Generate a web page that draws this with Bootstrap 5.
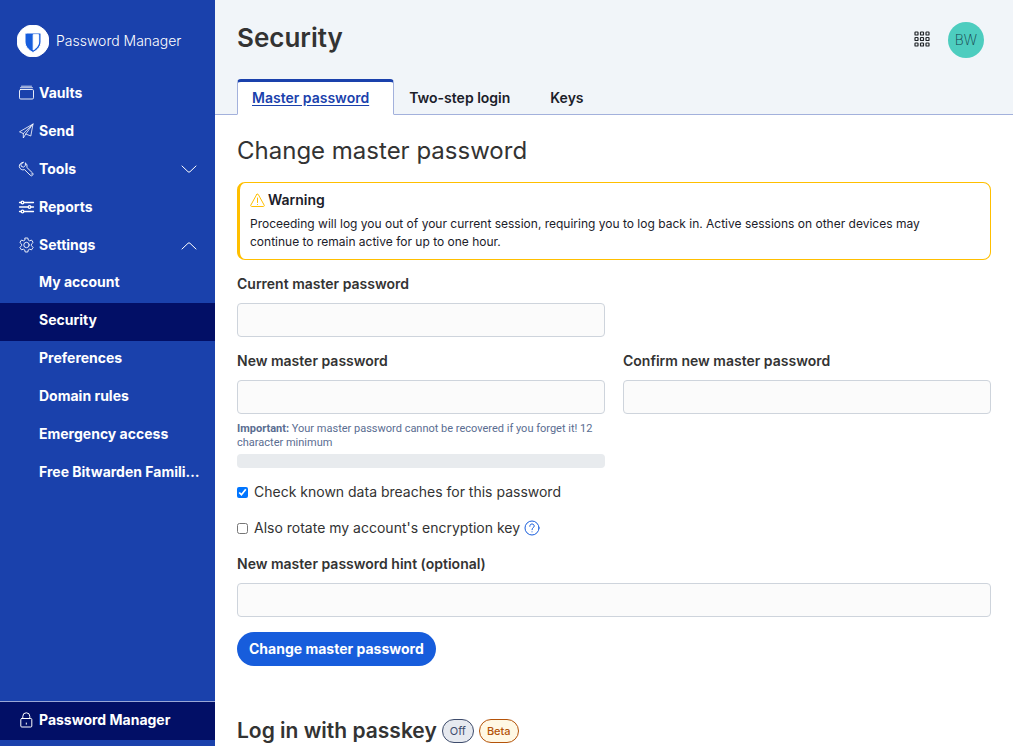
<!DOCTYPE html>
<html lang="en">
<head>
<meta charset="utf-8">
<meta name="viewport" content="width=device-width, initial-scale=1">
<title>Security | Password Manager</title>
<link href="https://cdn.jsdelivr.net/npm/bootstrap@5.3.0/dist/css/bootstrap.min.css" rel="stylesheet">
<style>
  body { font-family: Inter, "Open Sans", sans-serif; font-size: 14px; line-height: 20px; color: #333; background: #fff; }
  h1, h2 { color: #333; margin: 0; }
  h1 { font-size: 26px; line-height: 36px; font-weight: 600; }
  h2 { font-size: 24px; line-height: 32px; font-weight: 400; }
  svg { fill: none; stroke: currentColor; stroke-linecap: round; stroke-linejoin: round; flex: none; }

  .sidebar { width: 215px; background: #1a41ac; color: #fff; }
  .brand { padding: 25px 17px 18px; gap: 7px; font-size: 14px; font-weight: 300; color: #fff; }
  .side-link { height: 38px; padding: 0 18px 2px; gap: 4px; color: #fff; font-weight: 700; }
  .side-link:hover { color: #fff; background: #020f66; }
  .side-sub { padding: 0 12px 4px 39px; }
  .side-link.active { background: #020f66; }
  .switcher { border-top: 1px solid #99a6d6; background: #020f66; margin-bottom: 6px; }

  .page-head { background: #f1f5f9; padding: 20px 22px 0; }
  .avatar { width: 36px; height: 36px; background: #4dcdbf; color: #163d4a; font-size: 14px; font-weight: 200; border: 0; }
  .head-tools { gap: 18px; padding: 2px 7px 0 0; }
  .apps { padding: 0 0 3px; }
  .nav-tabs { --bs-nav-tabs-border-color: #a3b1dc; margin: 21px -22px 0; padding: 0 22px; }
  .nav-tabs .nav-link { border: 0 solid transparent; border-width: 3px 1px 1px; border-radius: 4px 4px 0 0; padding: 6px 24px 6px 14px; font-weight: 600; color: #1b2029; }
  .nav-tabs .nav-link.active { color: #1a41ac; text-decoration: underline; text-underline-offset: 2px; border-color: #1a41ac #a3b1dc #fff; background: #fff; }

  .content { padding: 20px 22px 0; }
  .warn { border: 1px solid #ffbf00; border-left-width: 3px; border-radius: 8px; padding: 7px 48px 8px 10px; color: #1b2029; font-size: 12px; line-height: 18px; margin: 15px 0 14px; }
  .warn-title { font-size: 14px; line-height: 20px; font-weight: 600; gap: 3px; margin-bottom: 5px; }
  .warn-title svg { color: #ffbf00; }
  .form-label { font-weight: 600; margin-bottom: 9px; display: block; }
  .form-control { height: 34px; border: 1px solid #ced4dc; border-radius: 4px; background: #fbfbfb; font-size: 14px; }
  .field { margin-bottom: 14px; }
  .pw-grid { --bs-gutter-x: 18px; }
  .hint { font-family: Roboto, Inter, sans-serif; font-size: 11px; line-height: 14px; color: #5a6d91; margin: 8px 0 4px; }
  .progress { height: 14px; border-radius: 4px; background: #e8ebee; }
  .tick { gap: 6px; margin-bottom: 16px; }
  .tick input { width: 11px; height: 11px; margin: 0; accent-color: #0075ff; }
  .btn-save { background: #175ddc; color: #fff; border: 0; border-radius: 17px; height: 34px; padding: 0 12px; font-size: 14px; line-height: 20px; font-weight: 700; margin-top: 1px; }
  .btn-save:hover { background: #1a41ac; color: #fff; }
  .help { color: #175ddc; margin-left: -2px; line-height: 1; }
  .passkey { margin-top: 49px; gap: 5px; }
  .passkey h2 { font-size: 21px; font-weight: 600; }
  .pill { border: 1px solid; border-radius: 12px; height: 24px; line-height: 22px; font-size: 11px; padding: 0 7px; }
  .pill-off { color: #3d4b6b; background: #e6e9ef; }
  .pill-beta { color: #b45309; background: #fff8e4; font-weight: 500; }
</style>
</head>
<body>
<div class="d-flex align-items-start">
  <aside class="sidebar d-flex flex-column flex-shrink-0 sticky-top vh-100">
    <a href="#" class="brand d-flex align-items-center text-decoration-none">
      <svg width="32" height="32" viewBox="0 0 32 32" stroke="none"><circle cx="16" cy="16" r="16" fill="#fff"/><path fill="#175ddc" d="M9 8h14c.7 0 1 .3 1 1v8c0 5.500-5.500 9.200-8 10.500C13.500 26.200 8 22.500 8 17V9c0-.7.300-1 1-1Zm7.200 2v15c2.500-1.500 5.500-4.300 5.500-8v-7Z"/></svg>
      <span>Password Manager</span>
    </a>
    <nav aria-label="Main">
      <a href="#" class="side-link d-flex align-items-center text-decoration-none">
        <svg width="17" height="16" viewBox="0 0 17 16"><rect x="1.500" y="4.500" width="14" height="9.500" rx="1.200" stroke-width=".9"/><path d="M2.500 2.700h12M3.500 1.200h10" stroke-width=".8"/></svg>
        <span>Vaults</span></a>
      <a href="#" class="side-link d-flex align-items-center text-decoration-none">
        <svg width="17" height="16" viewBox="0 0 17 16"><path d="M15 1 1.500 8.800l3.800 1.700L15 1l-2.200 12-5-2M5.300 10.500V15l2.500-4L15 1" stroke-width=".8"/></svg>
        <span>Send</span></a>
      <a href="#" class="side-link d-flex align-items-center text-decoration-none">
        <svg width="17" height="16" viewBox="0 0 17 16"><path d="M5.200 1.300a4 4 0 0 0-3.900 4.300 3.800 3.800 0 0 0 5.200 3l5.800 5.700a1.600 1.600 0 0 0 2.300-.1 1.600 1.600 0 0 0 0-2.200L8.800 6.400c.6-1.700.1-3.500-1.400-4.500v2.600L5.600 6.100 3.400 5.500 2.900 3.700Z" stroke-width=".9"/><path d="M13.200 13h.1"/></svg>
        <span>Tools</span>
        <svg class="ms-auto" width="16" height="16" viewBox="0 0 16 16"><path d="m1 5 6 5.700a1.400 1.400 0 0 0 2 0L15 5"/></svg></a>
      <a href="#" class="side-link d-flex align-items-center text-decoration-none">
        <svg width="17" height="16" viewBox="0 0 17 16" stroke-width="1.300"><path d="M1.500 3.500H3M6 3.500h9.500M1.500 8H10M13 8h2.500M1.500 12.500H3M6 12.500h9.500"/><circle cx="4.500" cy="3.500" r="1.300"/><circle cx="11.500" cy="8" r="1.300"/><circle cx="4.500" cy="12.500" r="1.300"/></svg>
        <span>Reports</span></a>
      <a href="#" class="side-link d-flex align-items-center text-decoration-none">
        <svg width="17" height="16" viewBox="0 0 17 16" stroke-width=".9"><path d="M7.200 1h2.600l.5 2.100 1.200.7 2.100-.7 1.500 2.400-1.700 1.600v1.600l1.700 1.700-1.500 2.400-2.100-.6-1.200.7L9.800 15H7.200l-.5-2.100-1.200-.7-2.100.6-1.500-2.400 1.700-1.700V7.100L1.900 5.500l1.500-2.400 2.100.7 1.200-.7Z"/><circle cx="8.500" cy="8" r="2.700"/></svg>
        <span>Settings</span>
        <svg class="ms-auto" width="16" height="16" viewBox="0 0 16 16"><path d="m1 12 6-5.700a1.400 1.400 0 0 1 2 0l6 5.700"/></svg></a>
      <a href="#" class="side-link side-sub d-flex align-items-center text-decoration-none"><span>My account</span></a>
      <a href="#" class="side-link side-sub active d-flex align-items-center text-decoration-none" aria-current="page"><span>Security</span></a>
      <a href="#" class="side-link side-sub d-flex align-items-center text-decoration-none"><span>Preferences</span></a>
      <a href="#" class="side-link side-sub d-flex align-items-center text-decoration-none"><span>Domain rules</span></a>
      <a href="#" class="side-link side-sub d-flex align-items-center text-decoration-none"><span>Emergency access</span></a>
      <a href="#" class="side-link side-sub d-flex align-items-center text-decoration-none"><span class="text-nowrap">Free Bitwarden Famili…</span></a>
    </nav>
    <div class="switcher mt-auto">
      <a href="#" class="side-link d-flex align-items-center text-decoration-none">
        <svg width="17" height="16" viewBox="0 0 17 16"><rect x="2.800" y="6.500" width="11" height="8.500" rx="1"/><path d="M4.800 6.500V4.300a3.500 3.500 0 0 1 7 0v2.200M8.300 11v1.200"/></svg>
        <span>Password Manager</span></a>
    </div>
  </aside>

  <main class="flex-grow-1">
    <header class="page-head">
      <div class="d-flex justify-content-between align-items-start">
        <h1>Security</h1>
        <div class="head-tools d-flex align-items-center">
          <button type="button" class="btn apps border-0 d-flex" aria-label="Product switcher">
            <svg width="16" height="16" viewBox="0 0 16 16" stroke="#2b2f3a" stroke-width="1.200"><g id="r"><rect x="1" y="1" width="3" height="3" rx=".6"/><rect x="6.500" y="1" width="3" height="3" rx=".6"/><rect x="12" y="1" width="3" height="3" rx=".6"/></g><use href="#r" y="5.500"/><use href="#r" y="11"/></svg>
          </button>
          <button type="button" class="avatar rounded-circle p-0">BW</button>
        </div>
      </div>
      <ul class="nav nav-tabs">
        <li class="nav-item"><a class="nav-link active" aria-current="page" href="#">Master password</a></li>
        <li class="nav-item"><a class="nav-link" href="#">Two-step login</a></li>
        <li class="nav-item"><a class="nav-link" href="#">Keys</a></li>
      </ul>
    </header>

    <div class="content">
      <h2>Change master password</h2>
      <div class="warn" role="note">
        <div class="warn-title d-flex align-items-center">
          <svg width="15" height="15" viewBox="0 0 15 15"><path d="M6.700 1.500.8 12.200c-.3.700 0 1.300.8 1.300h11.800c.8 0 1.100-.6.8-1.300L8.300 1.500c-.4-.7-1.200-.7-1.600 0ZM7.500 5v4.500M7.500 11.500v.1"/></svg>
          <span>Warning</span>
        </div>
        Proceeding will log you out of your current session, requiring you to log back in. Active sessions on other devices may continue to remain active for up to one hour.
      </div>
      <form>
        <div class="row pw-grid">
          <div class="col-6 field">
            <label class="form-label" for="current">Current master password</label>
            <input class="form-control" type="password" id="current">
          </div>
        </div>
        <div class="row pw-grid">
          <div class="col-6 field">
            <label class="form-label" for="new">New master password</label>
            <input class="form-control" type="password" id="new" aria-describedby="new-hint">
            <div class="hint" id="new-hint"><b>Important:</b> Your master password cannot be recovered if you forget it! 12 character minimum</div>
            <div class="progress" role="progressbar" aria-label="Password strength" aria-valuenow="0" aria-valuemin="0" aria-valuemax="100"></div>
          </div>
          <div class="col-6 field">
            <label class="form-label" for="confirm">Confirm new master password</label>
            <input class="form-control" type="password" id="confirm">
          </div>
        </div>
        <div class="tick d-flex align-items-center">
          <input type="checkbox" id="breach" checked>
          <label for="breach">Check known data breaches for this password</label>
        </div>
        <div class="tick d-flex align-items-center">
          <input type="checkbox" id="rotate">
          <label for="rotate">Also rotate my account's encryption key</label>
          <a href="#" class="help d-flex" aria-label="Help">
            <svg width="16" height="16" viewBox="0 0 16 16"><circle cx="8" cy="8" r="7"/><path d="M5.800 6.300C5.800 4.800 6.700 4 8 4s2.200.8 2.200 2c0 1.700-2.200 1.700-2.200 3.700M8 11.800v.1"/></svg>
          </a>
        </div>
        <div class="field">
          <label class="form-label" for="pwhint">New master password hint (optional)</label>
          <input class="form-control" type="text" id="pwhint">
        </div>
        <button type="submit" class="btn btn-save">Change master password</button>
      </form>
      <div class="passkey d-flex align-items-center">
        <h2>Log in with passkey</h2>
        <span class="pill pill-off">Off</span>
        <span class="pill pill-beta">Beta</span>
      </div>
    </div>
  </main>
</div>
<script src="https://cdn.jsdelivr.net/npm/bootstrap@5.3.0/dist/js/bootstrap.bundle.min.js"></script>
</body>
</html>
